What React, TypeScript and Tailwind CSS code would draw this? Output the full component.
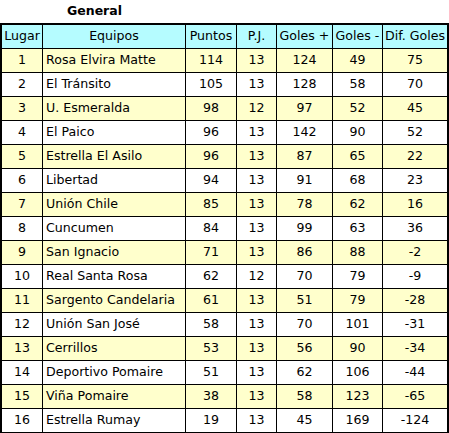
import React from "react";

const rows: [number, string, number, number, number, number, number][] = [
  [1, "Rosa Elvira Matte", 114, 13, 124, 49, 75],
  [2, "El Tránsito", 105, 13, 128, 58, 70],
  [3, "U. Esmeralda", 98, 12, 97, 52, 45],
  [4, "El Paico", 96, 13, 142, 90, 52],
  [5, "Estrella El Asilo", 96, 13, 87, 65, 22],
  [6, "Libertad", 94, 13, 91, 68, 23],
  [7, "Unión Chile", 85, 13, 78, 62, 16],
  [8, "Cuncumen", 84, 13, 99, 63, 36],
  [9, "San Ignacio", 71, 13, 86, 88, -2],
  [10, "Real Santa Rosa", 62, 12, 70, 79, -9],
  [11, "Sargento Candelaria", 61, 13, 51, 79, -28],
  [12, "Unión San José", 58, 13, 70, 101, -31],
  [13, "Cerrillos", 53, 13, 56, 90, -34],
  [14, "Deportivo Pomaire", 51, 13, 62, 106, -44],
  [15, "Viña Pomaire", 38, 13, 58, 123, -65],
  [16, "Estrella Rumay", 19, 13, 45, 169, -124],
];

const headers = ["Lugar", "Equipos", "Puntos", "P.J.", "Goles +", "Goles -", "Dif. Goles"];

export default function App() {
  return (
    <div
      className="w-[449px] h-[433px] bg-white text-black text-[12.6px]"
      style={{ fontFamily: '"DejaVu Sans", Verdana, sans-serif' }}
    >
      <div className="h-[23px] pl-[67px] flex items-center font-bold text-[12.5px]">General</div>
      <div className="grid grid-cols-[40px_142px_50px_39px_55px_49px_64px] gap-px bg-black border-2 border-black w-[449px]">
        {headers.map((h) => (
          <div key={h} className="h-[23px] bg-[#b5fcff] flex items-center justify-center whitespace-nowrap">
            {h}
          </div>
        ))}
        {rows.map((r, i) => {
          const bg = i % 2 === 0 ? "bg-[#ffffcc]" : "bg-white";
          return (
            <React.Fragment key={r[0]}>
              {r.map((v, j) => (
                <div
                  key={j}
                  className={`h-[23px] ${bg} flex items-center whitespace-nowrap ${
                    j === 1 ? "justify-start pl-[3px]" : "justify-center"
                  }`}
                >
                  {v}
                </div>
              ))}
            </React.Fragment>
          );
        })}
      </div>
    </div>
  );
}
